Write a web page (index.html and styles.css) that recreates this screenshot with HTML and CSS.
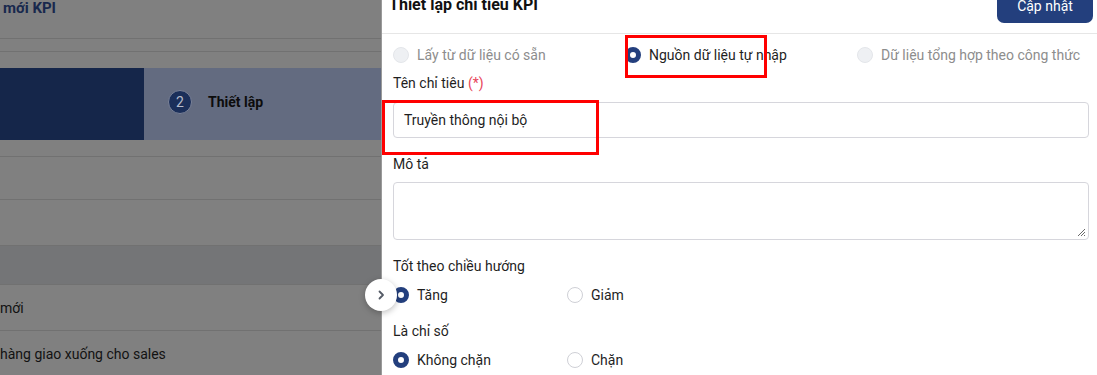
FILE: index.html
```html
<!DOCTYPE html>
<html lang="vi">
<head>
  <meta charset="UTF-8">
  <meta name="viewport" content="width=device-width, initial-scale=1.0">
  <title>Thiết lập chỉ tiêu KPI</title>
  <link rel="stylesheet" href="styles.css">
</head>
<body>
  <div class="page">
    <!-- background page, dimmed by the drawer overlay -->
    <section class="backdrop">
      <div class="bg-title">mới KPI</div>
      <div class="bg-line"></div>
      <div class="bg-gap"></div>
      <div class="steps">
        <div class="step step-done"></div>
        <div class="step step-current">
          <span class="step-num">2</span>
          <span class="step-label">Thiết lập</span>
        </div>
      </div>
      <div class="bg-row bg-row-a"></div>
      <div class="bg-row bg-row-b"></div>
      <div class="bg-row bg-row-c"></div>
      <div class="bg-row bg-head"></div>
      <div class="bg-row bg-item">mới</div>
      <div class="bg-row bg-item">hàng giao xuống cho sales</div>
    </section>

    <!-- drawer -->
    <aside class="drawer">
      <button class="drawer-toggle" type="button">
        <svg width="10" height="10" viewBox="0 0 10 10"><path d="M3.5 1.5 L7 5 L3.5 8.5" fill="none" stroke="#555b66" stroke-width="1.8" stroke-linecap="round" stroke-linejoin="round"/></svg>
      </button>

      <div class="drawer-head">
        <h2>Thiết lập chỉ tiêu KPI</h2>
        <button class="btn-primary" type="button">Cập nhật</button>
      </div>

      <div class="drawer-body">
        <div class="radio-row cols-3 source-row">
          <label class="radio disabled"><span class="dot"></span>Lấy từ dữ liệu có sẵn</label>
          <label class="radio checked"><span class="dot"></span>Nguồn dữ liệu tự nhập</label>
          <label class="radio disabled"><span class="dot"></span>Dữ liệu tổng hợp theo công thức</label>
        </div>

        <div class="field">
          <div class="field-label">Tên chỉ tiêu <span class="req">(*)</span></div>
          <div class="input">Truyền thông nội bộ</div>
        </div>

        <div class="field">
          <div class="field-label">Mô tả</div>
          <div class="textarea">
            <svg class="grip" width="9" height="9" viewBox="0 0 9 9"><path d="M8 1 L1 8 M8 4 L4 8 M8 7 L7 8" stroke="#6a6a6a" stroke-width="1"/></svg>
          </div>
        </div>

        <div class="field">
          <div class="field-label">Tốt theo chiều hướng</div>
          <div class="radio-row cols-4">
            <label class="radio checked"><span class="dot"></span>Tăng</label>
            <label class="radio"><span class="dot"></span>Giảm</label>
          </div>
        </div>

        <div class="field">
          <div class="field-label">Là chỉ số</div>
          <div class="radio-row cols-4">
            <label class="radio checked"><span class="dot"></span>Không chặn</label>
            <label class="radio"><span class="dot"></span>Chặn</label>
          </div>
        </div>
      </div>

      <!-- annotation boxes -->
      <div class="mark mark-source"></div>
      <div class="mark mark-name"></div>
    </aside>
  </div>
</body>
</html>
```

FILE: styles.css
```css
* {
  box-sizing: border-box;
}

body {
  margin: 0;
  font-family: Roboto, "Noto Sans", Arial, sans-serif;
  font-size: 14px;
  color: #1f1f1f;
  overflow: hidden;
}

.page {
  display: flex;
  height: 375px;
}

/* dimmed page behind the drawer */
.backdrop {
  width: 381px;
  flex-shrink: 0;
  background: #808080;
  overflow: hidden;
}

.bg-title {
  height: 39px;
  padding: 0 0 0 3px;
  font-size: 15px;
  font-weight: 700;
  line-height: 16px;
  color: #18284d;
  border-bottom: 1px solid #717171;
}

.bg-line {
  height: 13px;
  border-bottom: 1px solid #717171;
}

.bg-gap {
  height: 16px;
}

.steps {
  display: flex;
  height: 72px;
}

.step-done {
  width: 144px;
  background: #15264a;
}

.step-current {
  flex: 1;
  display: flex;
  align-items: center;
  gap: 16px;
  padding: 0 0 4px 24px;
  background: #636b80;
}

.step-num {
  width: 24px;
  height: 24px;
  border-radius: 50%;
  background: #1b2f5a;
  border: 1px solid #7c8398;
  color: #b7bccb;
  font-size: 14px;
  display: flex;
  align-items: center;
  justify-content: center;
}

.step-label {
  font-weight: 700;
  font-size: 14px;
  color: #0c0c0c;
}

.bg-row {
  border-bottom: 1px solid #717171;
}

.bg-row-a {
  height: 17px;
}

.bg-row-b {
  height: 43px;
}

.bg-row-c {
  height: 46px;
}

.bg-head {
  height: 39px;
  background: #747577;
}

.bg-item {
  height: 46px;
  line-height: 46px;
  font-size: 14px;
  color: #121212;
  white-space: nowrap;
}

/* drawer */
.drawer {
  position: relative;
  flex: 1;
  background: #fff;
  border-left: 1px solid #9a9a9a;
}

.drawer-toggle {
  position: absolute;
  left: -17px;
  top: 279px;
  width: 32px;
  height: 32px;
  border-radius: 50%;
  border: none;
  background: #fff;
  box-shadow: 0 2px 6px rgba(0, 0, 0, 0.25);
  display: flex;
  align-items: center;
  justify-content: center;
  padding: 0;
  z-index: 2;
}

.drawer-head {
  height: 34px;
  display: flex;
  justify-content: space-between;
  align-items: flex-start;
  padding: 0 4px 0 7px;
  border-bottom: 1px solid #e6e6e6;
}

.drawer-head h2 {
  margin: -5px 0 0;
  font-size: 16px;
  font-weight: 700;
  line-height: 20px;
  color: #111;
}

.btn-primary {
  margin-top: -12px;
  width: 96px;
  height: 35px;
  padding: 0;
  border: none;
  border-radius: 7px;
  background: #233f7d;
  color: #fff;
  font-family: inherit;
  font-size: 14px;
  line-height: 20px;
}

.drawer-body {
  padding: 11px 8px 0 11px;
}

.radio-row {
  display: grid;
  height: 20px;
}

.cols-3 {
  grid-template-columns: repeat(3, 1fr);
}

.cols-4 {
  grid-template-columns: repeat(4, 1fr);
}

.source-row {
  margin-bottom: 8px;
}

.radio {
  display: flex;
  align-items: center;
  gap: 8px;
  line-height: 20px;
  color: #1f1f1f;
  white-space: nowrap;
}

.radio .dot {
  width: 16px;
  height: 16px;
  border-radius: 50%;
  border: 1px solid #cfd0d6;
  background: #fff;
  flex-shrink: 0;
}

.radio.checked .dot {
  border: 5px solid #233f7d;
}

.radio.disabled {
  color: #8d8d8d;
}

.radio.disabled .dot {
  background: #eef0f3;
  border-color: #e4e6ea;
}

.field {
  margin-bottom: 16px;
}

.field-label {
  line-height: 20px;
  margin-bottom: 9px;
  color: #1f1f1f;
}

.field-label .req {
  color: #e8455a;
}

.input {
  height: 36px;
  padding: 0 10px;
  line-height: 34px;
  border: 1px solid #d6d6dc;
  border-radius: 4px;
  color: #1f1f1f;
}

.textarea {
  position: relative;
  height: 58px;
  margin-top: -1px;
  border: 1px solid #d6d6dc;
  border-radius: 4px;
}

.grip {
  position: absolute;
  right: 2px;
  bottom: 2px;
}

.field-dir .field-label {
  margin-bottom: 8px;
}

/* red annotation boxes */
.mark {
  position: absolute;
  border: 3px solid #f00;
  pointer-events: none;
}

.mark-source {
  left: 243px;
  top: 35px;
  width: 142px;
  height: 43px;
}

.mark-name {
  left: 0;
  top: 100px;
  width: 217px;
  height: 55px;
}
```
